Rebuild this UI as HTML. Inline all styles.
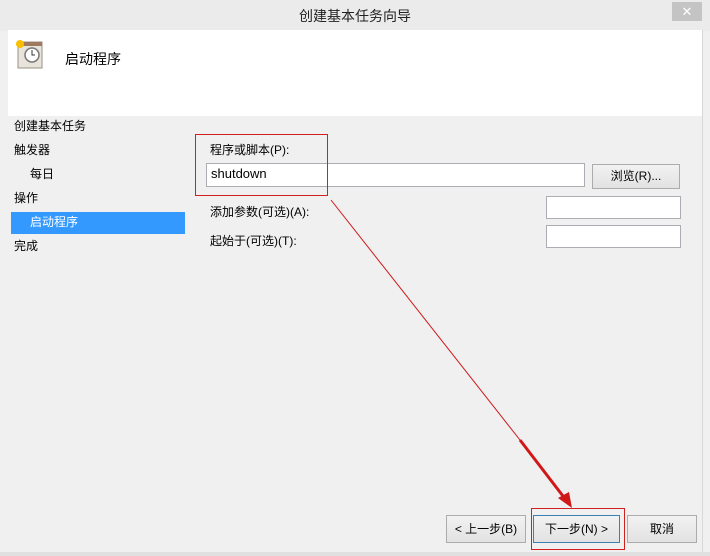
<!DOCTYPE html>
<html><head><meta charset="utf-8"><style>
body{margin:0;width:710px;height:556px;background:#f0f0f0;position:relative;overflow:hidden;font-family:"Liberation Sans","Noto Sans CJK SC",sans-serif;font-size:12px;color:#000}
.a{position:absolute}
.inp{position:absolute;background:#fff;border:1px solid #abadb3;box-sizing:border-box}
.btn{position:absolute;background:linear-gradient(#f2f2f2,#e2e2e2);border:1px solid #acacac;box-sizing:border-box;text-align:center;line-height:26px}
</style></head><body>
<div class="a" style="left:0;top:0;width:710px;height:31px;background:#ebebeb"></div>
<div class="a" style="left:0;top:6px;width:710px;text-align:center;font-size:14px;color:#222">创建基本任务向导</div>
<div class="a" style="left:672px;top:2px;width:30px;height:19px;background:#c4c4c4;color:#fff;text-align:center;line-height:19px;font-size:13px">✕</div>
<div class="a" style="left:8px;top:30px;width:694px;height:86px;background:#fff"></div>
<div class="a" style="left:702px;top:30px;width:1px;height:522px;background:#d8d8d8"></div>
<svg class="a" style="left:14px;top:38px" width="32" height="32" viewBox="0 0 32 32">
<rect x="4" y="4" width="24" height="26" fill="#e8e4dc" stroke="#9a8f80"/><rect x="4" y="4" width="24" height="4" fill="#a07a60"/>
<circle cx="18" cy="17" r="7" fill="#fff" stroke="#777" stroke-width="1.5"/><path d="M18 12v5h3" stroke="#333" fill="none"/>
<circle cx="6" cy="6" r="4" fill="#f8c000"/></svg>
<div class="a" style="left:65px;top:49px;font-size:14px">启动程序</div>
<div class="a" style="left:14px;top:117px">创建基本任务</div>
<div class="a" style="left:14px;top:141px">触发器</div>
<div class="a" style="left:30px;top:165px">每日</div>
<div class="a" style="left:14px;top:189px">操作</div>
<div class="a" style="left:11px;top:212px;width:174px;height:22px;background:#3399ff"></div>
<div class="a" style="left:30px;top:213px;color:#fff">启动程序</div>
<div class="a" style="left:14px;top:237px">完成</div>
<div class="a" style="left:210px;top:141px">程序或脚本(P):</div>
<div class="inp" style="left:206px;top:163px;width:379px;height:24px"></div>
<div class="a" style="left:211px;top:166px;font-size:13px">shutdown</div>
<div class="btn" style="left:592px;top:164px;width:88px;height:25px;line-height:23px">浏览(R)...</div>
<div class="a" style="left:210px;top:203px">添加参数(可选)(A):</div>
<div class="inp" style="left:546px;top:196px;width:135px;height:23px"></div>
<div class="a" style="left:210px;top:232px">起始于(可选)(T):</div>
<div class="inp" style="left:546px;top:225px;width:135px;height:23px"></div>
<div class="a" style="left:195px;top:134px;width:131px;height:60px;border:1px solid #d02020"></div>
<svg class="a" style="left:0;top:0" width="710" height="556"><line x1="331" y1="200" x2="520" y2="440" stroke="#d01818" stroke-width="1"/><line x1="520" y1="440" x2="566" y2="500" stroke="#d01818" stroke-width="3"/><path d="M572 508 L558 498 L569 492 Z" fill="#d01818"/></svg>
<div class="btn" style="left:446px;top:515px;width:80px;height:28px">&lt; 上一步(B)</div>
<div class="btn" style="left:533px;top:515px;width:87px;height:28px;border-color:#3c7fb1">下一步(N) &gt;</div>
<div class="btn" style="left:627px;top:515px;width:70px;height:28px">取消</div>
<div class="a" style="left:531px;top:508px;width:92px;height:40px;border:1px solid #d02020"></div>
<div class="a" style="left:0;top:552px;width:710px;height:4px;background:#e0e0e0"></div>
</body></html>
